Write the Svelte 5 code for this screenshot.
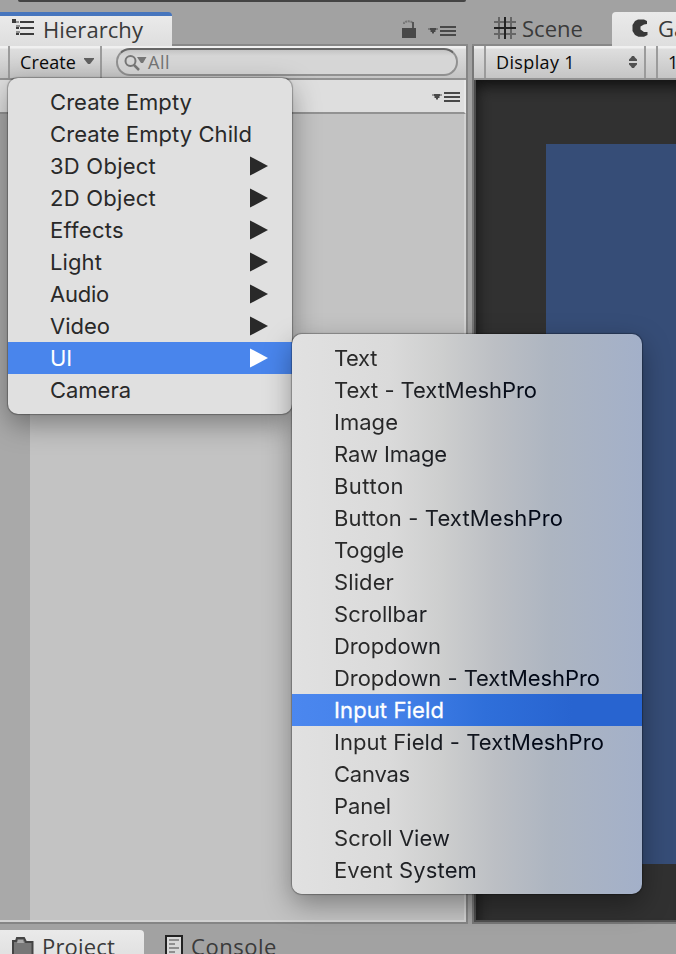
<script>
  const createMenu = [
    { label: 'Create Empty', w: 142 },
    { label: 'Create Empty Child', w: 202 },
    { label: '3D Object', w: 106, sub: true },
    { label: '2D Object', w: 106, sub: true },
    { label: 'Effects', w: 74, sub: true },
    { label: 'Light', w: 52, sub: true },
    { label: 'Audio', w: 59, sub: true },
    { label: 'Video', w: 60, sub: true },
    { label: 'UI', w: 22, sub: true, active: true },
    { label: 'Camera', w: 81 }
  ];
  const uiMenu = [
    { label: 'Text', w: 43 },
    { label: 'Text - TextMeshPro', w: 203 },
    { label: 'Image', w: 64 },
    { label: 'Raw Image', w: 113 },
    { label: 'Button', w: 70 },
    { label: 'Button - TextMeshPro', w: 229 },
    { label: 'Toggle', w: 70 },
    { label: 'Slider', w: 60 },
    { label: 'Scrollbar', w: 93 },
    { label: 'Dropdown', w: 107 },
    { label: 'Dropdown - TextMeshPro', w: 266 },
    { label: 'Input Field', w: 110, active: true },
    { label: 'Input Field - TextMeshPro', w: 270 },
    { label: 'Canvas', w: 76 },
    { label: 'Panel', w: 57 },
    { label: 'Scroll View', w: 116 },
    { label: 'Event System', w: 143 }
  ];

  // Tracks a label out or in so that it takes the given width.
  function fit(node, width) {
    const natural = node.getBoundingClientRect().width;
    node.style.letterSpacing = `${(width - natural) / node.textContent.length}px`;
  }
</script>

{#snippet options()}
  <svg class="options" width="30" height="10" viewBox="0 0 30 10">
    <path d="M0 2h10v2h-2v2h-2v2h-2v-2h-2v-2h-2z" fill="#5a5a5a" opacity=".55" />
    <path d="M2 2h6v2h-1v2h-1v1h-2v-1h-1v-2h-1z" fill="#484848" />
    <path d="M12 1h16M12 5h16M12 9h16" stroke="#484848" stroke-width="2" />
  </svg>
{/snippet}

{#snippet menuRow(item)}
  <div class="row" class:active={item.active}>
    <span class="name" use:fit={item.w}>{item.label}</span>
    {#if item.sub}
      <svg width="18" height="20" viewBox="0 0 18 20"><path d="M0 .4 18 10 0 19.6z" fill="currentColor" /></svg>
    {/if}
  </div>
{/snippet}

<div class="editor">
  <header class="strip"><div class="edge"></div></header>

  <main class="docks">
    <section class="dock">
      <div class="tabs">
        <div class="tab on hierarchy">
          <svg width="22" height="16" viewBox="0 0 22 16" fill="#3c3c3c">
            <path d="M0 0h4v4H0zM8 2h14v2H8zM8 8h14v2H8zM8 14h14v2H8zM4 8h3v2H4zM4 14h3v2H4z" />
            <path d="M4 2h3v2H4zM4 6h4v2H4zM4 12h4v2H4z" opacity=".5" />
          </svg>
          <span use:fit={100}>Hierarchy</span>
        </div>
        <div class="tools">
          <svg width="16" height="18" viewBox="0 0 16 18">
            <path d="M3 4V3C4 .6 12 .6 12 4V8" fill="none" stroke="#777" stroke-width="2" stroke-dasharray="2 .6" />
            <path d="M11 2h2v6h-2z" fill="#555" />
            <path d="M1 8h14v10H1z" fill="#484848" />
          </svg>
          {@render options()}
        </div>
      </div>
      <div class="panel left">
        <div class="toolbar">
          <div class="create">
            <span use:fit={56}>Create</span>
            <svg width="10" height="7" viewBox="0 0 10 7"><path d="M0 0h10v1L6 6H4L0 1z" fill="#606060" /></svg>
          </div>
          <div class="search">
            <svg width="24" height="18" viewBox="0 0 24 18" fill="none">
              <circle cx="6.500" cy="8" r="5" stroke="#777" stroke-width="2" />
              <path d="M10 12 15 17" stroke="#777" stroke-width="2.500" />
              <path d="M13 4h9.500l-3.500 6h-2z" fill="#777" />
            </svg>
            <span use:fit={22}>All</span>
          </div>
        </div>
        <div class="scene-row">{@render options()}</div>
        <div class="tree"><div class="gutter"></div></div>
      </div>
    </section>

    <section class="dock">
      <div class="tabs right-tabs">
        <div class="tab scene">
          <svg width="22" height="22" viewBox="0 0 22 22" stroke-width="2">
            <path d="M0 5h22M0 17h22M5 0v22M17 0v22" stroke="#666" />
            <path d="M0 11h22M11 0v22" stroke="#222" />
          </svg>
          <span use:fit={61}>Scene</span>
        </div>
        <div class="tab on game">
          <svg width="17" height="18" viewBox="0 0 17 18"><path d="M15 5V2l-3-1.500H6L3 2 .5 6v6l2.500 4 3.500 1.700H12l3.500-1.700v-3h-3.500L8.500 10.500V7.500l3.500-2z" fill="#383838" /></svg>
          <span>Game</span>
        </div>
      </div>
      <div class="panel right">
        <div class="toolbar">
          <div class="display">
            <span use:fit={79}>Display 1</span>
            <svg width="10" height="14" viewBox="0 0 10 14" fill="#505050"><path d="M4 1h2l1 1.500 2 2V6H1V4.500l2-2zM1 8h8v1.500l-2 2L6 13H4l-1-1.500-2-2z" /></svg>
          </div>
          <div class="aspect">16:9</div>
        </div>
        <div class="view"><div class="camera"></div></div>
      </div>
    </section>
  </main>

  <footer class="bottom">
    <div class="tab on project">
      <svg width="22" height="20" viewBox="0 0 22 20">
        <path d="M1 19V5h3l1-3h7l2 4h6.500v13z" fill="#777" stroke="#444" stroke-width="2" />
        <path d="M6 4h5l1 3H5z" fill="#aaa" />
      </svg>
      <span use:fit={73}>Project</span>
    </div>
    <div class="tab console">
      <svg width="18" height="22" viewBox="0 0 18 22">
        <path d="M1 1h16v22H1z" fill="#d8d8d8" stroke="#222" stroke-width="2" />
        <path d="M4 5h10M4 9h6M4 13h10M4 17h6" stroke="#777" stroke-width="1.600" />
      </svg>
      <span use:fit={86}>Console</span>
    </div>
  </footer>

  <nav class="menu create-menu">
    {#each createMenu as item}{@render menuRow(item)}{/each}
  </nav>
  <nav class="menu ui-menu">
    {#each uiMenu as item}{@render menuRow(item)}{/each}
  </nav>
</div>

<style>
  :global(body) { margin: 0; overflow: hidden; }
  .editor {
    position: relative;
    box-sizing: border-box;
    width: 676px;
    height: 954px;
    overflow: hidden;
    display: grid;
    grid-template-rows: 12px 912px 30px;
    background: #a2a2a2;
    color: #3a3a3a;
    font-family: 'Open Sans', 'Noto Sans', sans-serif;
    white-space: nowrap;
  }
  svg { flex: none; display: block; }
  .edge { width: 448px; height: 2px; margin-left: 18px; background: #444; border-radius: 0 0 4px 4px; }
  .docks { display: grid; grid-template-columns: 468px 204px; gap: 4px; }
  .dock { display: flex; flex-direction: column; min-width: 0; }
  .tabs { display: flex; height: 34px; flex: none; border-bottom: 2px solid #888; box-sizing: border-box; }
  .tab { display: flex; flex: none; align-items: center; box-sizing: border-box; padding-bottom: 2px; font-size: 22px; line-height: 30px; }
  .on { background: linear-gradient(#eaeaea, #dedede); border-radius: 0 4px 0 0; }
  .tabs .tab { height: 34px; }
  .tabs .hierarchy { width: 172px; gap: 9px; padding: 0 0 5px 12px; border-top: 4px solid #4675bd; }
  .hierarchy svg { margin-bottom: 3px; }
  .tools { display: flex; margin-left: auto; padding: 8px 10px 0 0; gap: 11px; }
  .tools .options { margin-top: 6px; }
  .panel { flex: 1; display: flex; flex-direction: column; box-sizing: border-box; min-height: 0; }
  .left { border-right: 2px solid #858585; border-bottom: 2px solid #858585; box-shadow: inset -2px -2px #d2d2d2; }
  .toolbar {
    display: flex;
    flex: none;
    box-sizing: border-box;
    height: 34px;
    border-bottom: 2px solid #929292;
    background: linear-gradient(#f0f0f0 0 2px, #dedede 3px, #c5c5c5);
    color: #090909;
    font-size: 18px;
    line-height: 33px;
  }
  .left .toolbar { padding-left: 8px; }
  .create {
    display: flex;
    flex: none;
    box-sizing: border-box;
    width: 94px;
    gap: 8px;
    border-left: 2px solid #9b9b9b;
    border-right: 2px solid #9b9b9b;
    padding-left: 10px;
  }
  .create svg { margin-top: 12px; }
  .search {
    display: flex;
    flex: none;
    align-items: center;
    box-sizing: border-box;
    width: 342px;
    height: 28px;
    margin: 2px 0 0 14px;
    padding-left: 6px;
    border: 2px solid #919191;
    border-top-color: #666;
    border-radius: 14px;
    background: linear-gradient(#c4c4c4, #d6d6d6 6px);
    color: #747474;
  }
  .search span { padding-top: 1px; }
  .scene-row {
    height: 32px;
    box-sizing: content-box;
    flex: none;
    display: flex;
    justify-content: flex-end;
    align-items: center;
    padding-right: 2px;
    background: #dedede;
    border-bottom: 2px solid #929292;
    border-right: 2px solid #e8e8e8;
  }
  .scene-row :global(svg) { margin-top: 2px; }
  .tree { flex: 1; display: flex; margin: 0 2px 2px 0; background: #c3c3c3; }
  .gutter { width: 30px; background: #a9a9a9; }
  .right-tabs { padding-left: 22px; }
  .scene { width: 118px; gap: 6px; }
  .game { width: 100px; padding-left: 20px; gap: 9px; border-radius: 4px 0 0; }
  .right { border: solid #777; border-width: 0 0 2px 2px; }
  .right .toolbar { padding-left: 10px; }
  .display {
    display: flex;
    flex: none;
    box-sizing: border-box;
    width: 162px;
    padding: 0 6px 0 10px;
    justify-content: space-between;
    border-left: 2px solid #9b9b9b;
    border-right: 2px solid #9b9b9b;
  }
  .display svg { margin-top: 9px; }
  .aspect { flex: none; margin-left: 10px; padding-left: 10px; border-left: 2px solid #9b9b9b; }
  .view {
    flex: 1;
    display: flex;
    background: #313131;
    border-bottom: 2px solid #505050;
    box-shadow: inset 2px 0 #4c4c4c, inset 6px 10px 14px -4px #111;
  }
  .camera { margin: 64px 0 56px 72px; flex: 1; background: #364d77; }
  .bottom { display: flex; padding-top: 6px; box-sizing: border-box; overflow: hidden; }
  .bottom .tab { height: 34px; }
  .project { width: 144px; padding-left: 12px; gap: 8px; }
  .console { padding-left: 21px; gap: 8px; }

  .menu {
    position: absolute;
    box-sizing: border-box;
    padding: 8px 0;
    border-radius: 10px;
    color: #292929;
    font: 22px/32px Inter, 'Liberation Sans', sans-serif;
  }
  .create-menu {
    left: 8px;
    top: 78px;
    width: 284px;
    background: #e0e0e0;
    box-shadow: 0 0 1px 1px rgba(0, 0, 0, 0.28), 0 10px 28px rgba(0, 0, 0, 0.36);
  }
  .ui-menu {
    left: 292px;
    top: 334px;
    width: 350px;
    background:
      linear-gradient(transparent 70%, rgba(170, 174, 180, 0.3)) right / 35% 100% no-repeat,
      linear-gradient(90deg, #e1e1e1 0, #dadada 28%, #cdcece 43%, #bcbfc4 58%, #adb5c1 74%, #a2b0cb 100%);
    background: linear-gradient(90deg, #e1e1e1 0, #dadada 28%, #cdcece 43%, #bcbfc4 58%, #adb5c1 74%, #a3b0c9 100%);
    box-shadow: 0 0 1px 1px rgba(0, 0, 0, 0.28), 0 10px 28px rgba(0, 0, 0, 0.36);
  }
  .row { display: flex; align-items: center; justify-content: space-between; height: 32px; padding: 0 24px 0 42px; }
  .ui-menu .row:not(.active) .name {
    background: linear-gradient(90deg, #292929 40px, #000716 210px);
    background-clip: text;
    color: transparent;
  }
  .active { background: #4985ec; color: #fff; }
  .ui-menu .active { background: linear-gradient(90deg, #4b87ef, #4380e8 30%, #2f6fda 55%, #2864d0 80%); -webkit-text-stroke: 0.3px #fff; }
</style>
